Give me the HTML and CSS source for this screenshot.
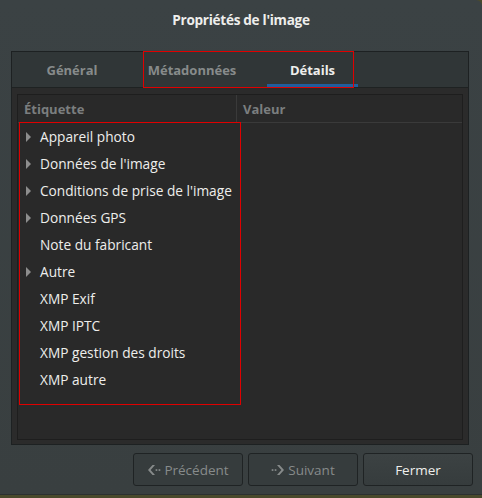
FILE: index.html
```html
<!DOCTYPE html>
<html lang="fr">
<head>
    <meta charset="UTF-8">
    <meta name="viewport" content="width=device-width, initial-scale=1.0">
    <title>Propriétés de l'image</title>
    <link rel="stylesheet" href="styles.css">
</head>
<body>
    <div class="window">
        <div class="titlebar">Propriétés de l'image</div>
        <div class="notebook">
            <div class="tabs">
                <div class="tab">Général</div>
                <div class="tab">Métadonnées</div>
                <div class="tab active">Détails</div>
                <div class="mark mark-tabs"></div>
            </div>
            <div class="page">
                <div class="tree">
                    <div class="tree-head">
                        <div class="col col-label">Étiquette</div>
                        <div class="col col-value">Valeur</div>
                    </div>
                    <div class="tree-body">
                        <div class="row"><span class="expander"></span>Appareil photo</div>
                        <div class="row"><span class="expander"></span>Données de l'image</div>
                        <div class="row"><span class="expander"></span>Conditions de prise de l'image</div>
                        <div class="row"><span class="expander"></span>Données GPS</div>
                        <div class="row"><span class="leaf"></span>Note du fabricant</div>
                        <div class="row"><span class="expander"></span>Autre</div>
                        <div class="row"><span class="leaf"></span>XMP Exif</div>
                        <div class="row"><span class="leaf"></span>XMP IPTC</div>
                        <div class="row"><span class="leaf"></span>XMP gestion des droits</div>
                        <div class="row"><span class="leaf"></span>XMP autre</div>
                        <div class="mark mark-rows"></div>
                    </div>
                </div>
            </div>
        </div>
        <div class="actions">
            <button class="btn" disabled>
                <svg width="14" height="14" viewBox="0 0 14 14"><path d="M5.5 2 L1 7 L5.5 12 L8 12 L3.6 7 L8 2 Z" fill="currentColor"/><rect x="8.6" y="6.2" width="1.7" height="1.7" fill="currentColor"/><rect x="11.6" y="6.2" width="1.7" height="1.7" fill="currentColor"/></svg>
                Précédent
            </button>
            <button class="btn" disabled>
                <svg width="14" height="14" viewBox="0 0 14 14"><rect x="0.7" y="6.2" width="1.7" height="1.7" fill="currentColor"/><rect x="3.7" y="6.2" width="1.7" height="1.7" fill="currentColor"/><path d="M6 2 L8.5 2 L13 7 L8.5 12 L6 12 L10.4 7 Z" fill="currentColor"/></svg>
                Suivant
            </button>
            <button class="btn">Fermer</button>
        </div>
    </div>
</body>
</html>
```

FILE: styles.css
```css
body {
    margin: 0;
    padding: 0;
    background: #4a4a2c;
    font-family: "Open Sans", "DejaVu Sans", sans-serif;
    font-size: 13px;
}
.window {
    width: 482px;
    height: 494px;
    background: linear-gradient(#3b4244, #393f40);
    border-top-right-radius: 6px;
    border-bottom: 1px solid #2c3031;
    display: flex;
    flex-direction: column;
}
.titlebar {
    height: 40px;
    line-height: 40px;
    text-align: center;
    color: #eeeeec;
    font-weight: bold;
    font-size: 13.6px;
    letter-spacing: -0.3px;
}
.notebook {
    margin: 11px 13px 0 11px;
    height: 392px;
    border: 1px solid #1d2122;
    display: flex;
    flex-direction: column;
}
.tabs {
    position: relative;
    height: 35px;
    background: #303637;
    border-bottom: 1px solid #1e2222;
    display: flex;
}
.tab {
    width: 120px;
    box-sizing: border-box;
    padding: 0 14px;
    display: flex;
    align-items: center;
    justify-content: center;
    color: #878b8b;
    font-weight: bold;
    font-size: 13px;
}
.tab.active {
    color: #eeeeec;
    box-shadow: inset 0 -3px 0 #215d9c;
    margin: 0 15px;
    width: 91px;
    padding: 0;
}
.page {
    flex: 1;
    background: #2b2b2b;
    padding: 6px 5px 4px 5px;
    display: flex;
}
.tree {
    flex: 1;
    border: 1px solid #1e1e1e;
    background: #292929;
    display: flex;
    flex-direction: column;
}
.tree-head {
    height: 27px;
    border-bottom: 1px solid #3a3a3a;
    display: flex;
    color: #7b7e7f;
    font-weight: bold;
}
.col {
    display: flex;
    align-items: center;
    padding-left: 6px;
}
.col-label {
    width: 212px;
    border-right: 1px solid #3a3a3a;
}
.col-value {
    flex: 1;
}
.tree-body {
    position: relative;
    flex: 1;
}
.row {
    height: 27px;
    display: flex;
    align-items: center;
    color: #eeeeec;
    font-size: 13.7px;
}
.expander,
.leaf {
    width: 22px;
    height: 10px;
    flex: none;
}
.expander::before {
    content: "";
    display: block;
    margin-left: 8px;
    width: 0;
    height: 0;
    border-top: 5px solid transparent;
    border-bottom: 5px solid transparent;
    border-left: 5px solid #8d8d8d;
}
.mark {
    position: absolute;
    border: 1px solid #e00000;
    pointer-events: none;
}
.mark-tabs {
    left: 131px;
    top: -1px;
    width: 209px;
    height: 35px;
}
.mark-rows {
    left: 1px;
    top: -1px;
    width: 220px;
    height: 281px;
}
.actions {
    display: flex;
    justify-content: flex-end;
    gap: 5px;
    padding: 8px 9px 0 0;
}
.btn {
    width: 110px;
    height: 33px;
    border: 1px solid #1f2324;
    border-radius: 3px;
    background: linear-gradient(#3c4243, #363c3d);
    color: #eeeeec;
    font-family: "Open Sans", "DejaVu Sans", sans-serif;
    font-size: 13.5px;
    font-weight: normal;
    display: flex;
    align-items: center;
    justify-content: center;
    gap: 3px;
    padding: 0;
}
.btn:disabled {
    background: #363c3d;
    color: #878b8b;
}
```
